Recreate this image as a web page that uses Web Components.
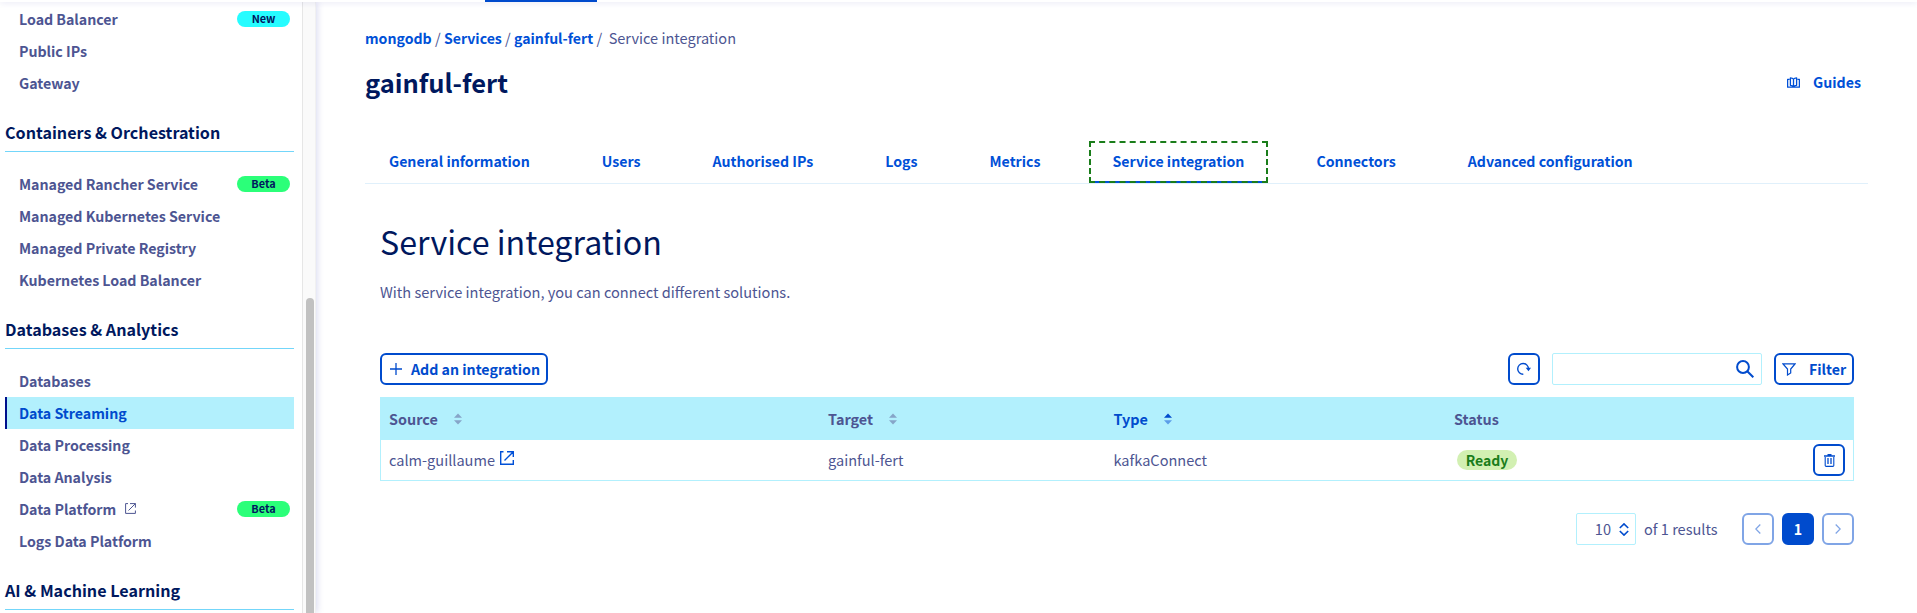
<!DOCTYPE html>
<html lang="en">
<head>
<meta charset="utf-8">
<title>Service integration</title>
<style>
html,body{margin:0;height:100%;overflow:hidden;background:#fff}
body{font:400 14.550px/22px "Noto Sans CJK SC",sans-serif;color:#4d5592;
--primary:#0050d7;--strong:#004bcd;--deep:#00185e;--text:#4d5592;--ice:#b2f0fd}
</style>
</head>
<body>
<cloud-app></cloud-app>
<script>
const define=(name,css,html)=>customElements.define(name,class extends HTMLElement{
  constructor(){super();this.attachShadow({mode:'open'}).innerHTML=`<style>:host{display:block;box-sizing:border-box}*{box-sizing:border-box}svg{display:block;flex:none}${css}</style>${typeof html==='function'?html(this):html}`}
});

const ICONS={
  external:['0 0 14 14','<path d="M3.500 .7H.7v12.600h12.600V9M7 .7h6.300V6M13.300 .7 4.500 9.500" fill="none" stroke="currentColor" stroke-width="1.400"/>'],
  externalThin:['0 0 11 11','<path d="M3 .6H.6v9.800h9.800V7.500M5 .6h5.400v4M10.400 .6 3.500 7.500" fill="none" stroke="currentColor" stroke-width="1"/>'],
  plus:['0 0 12 12','<path d="M6 0v12M0 6h12" fill="none" stroke="currentColor" stroke-width="1.300"/>'],
  refresh:['0 0 14 14','<path d="M6.300 12.300A5.400 5.400 0 1 1 11.500 7" fill="none" stroke="currentColor" stroke-width="1.400"/><path d="M8.700 5.800h5.300L11.500 9.300z" fill="currentColor"/>'],
  search:['0 0 18 18','<circle cx="7" cy="7" r="5.900" fill="none" stroke="currentColor" stroke-width="2"/><path d="m11.300 11.300 6 6" stroke="currentColor" stroke-width="2"/>'],
  filter:['0 0 14 13','<path d="M1 .9h12L8.700 6v4L5.500 12V6z" fill="none" stroke="currentColor" stroke-width="1.200"/>'],
  trash:['0 0 11 13','<path d="M3.500 0h4v1.200H11v1.500H0V1.200h3.500z" fill="currentColor"/><path d="M1.200 3v8.500q0 .9.900.9h6.800q.9 0 .9-.9V3" fill="none" stroke="currentColor" stroke-width="1.100"/><path d="M4 4v6M7 4v6" stroke="currentColor" stroke-width="1.300"/>'],
  book:['0 0 13 11','<path d="M2.500 2.400H.6v7.700h11.800V2.400h-1.900M3.400 8.300V.9Q5.600 1 6.500 2.200 7.400 1 9.600.9v7.400Q7.400 8.400 6.500 9.600 5.600 8.400 3.400 8.300zM6.500 2.200v7.400" fill="none" stroke="currentColor" stroke-width="1.300" stroke-linejoin="round"/>'],
  left:['0 0 6 10','<path d="M5.300 .5.8 5l4.500 4.500" fill="none" stroke="currentColor" stroke-width="1.300"/>'],
  right:['0 0 6 10','<path d="m.7.5L5.200 5 .7 9.500" fill="none" stroke="currentColor" stroke-width="1.300"/>'],
  updown:['0 0 10 13','<path d="M.8 5 5 .9 9.200 5M.8 8 5 12.100 9.200 8" fill="none" stroke="currentColor" stroke-width="1.600"/>'],
  sort:['0 0 8 12','<path class="up" d="M0 4.800 4 .5l4 4.300z" fill="var(--up,#86a5c8)"/><path d="M0 7.200h8l-4 4.300z" fill="var(--down,#86a5c8)"/>']
};
define('ui-icon',':host{display:inline-block;flex:none}',e=>{
  const [box,body]=ICONS[e.getAttribute('name')],[,,w,h]=box.split(' ');
  return `<svg viewBox="${box}" width="${w}" height="${h}">${body}</svg>`});

define('ui-badge',`:host{width:53px;height:16px;border-radius:8px;background:#2bff79;color:var(--deep);font-size:10.900px;font-weight:700;line-height:15px;text-align:center;margin-right:4px}:host([kind=new]){background:#26fcff}`,'<slot></slot>');

define('nav-item',`:host{display:flex;align-items:center;justify-content:space-between;height:32px;padding-left:14px;font-size:14.220px;letter-spacing:-.03px;font-weight:700;color:var(--text)}
:host([active]){background:var(--ice);color:var(--strong);border-left:2px solid #00108c;padding-left:12px}
span{display:flex;align-items:center;gap:9px;padding-bottom:1px}slot[name=badge]::slotted(*){margin-top:-1px}`,'<span><slot></slot></span><slot name="badge"></slot>');

define('nav-group',`h2{margin:0 0 16px;height:53px;padding-top:21px;border-bottom:1px solid #73d6fa;font-size:16.130px;line-height:24px;font-weight:700;color:var(--deep)}`,
  e=>(e.hasAttribute('label')?`<h2>${e.getAttribute('label').replace('&','&amp;')}</h2>`:'')+'<slot></slot>');

define('side-nav',`:host{display:flex;width:316px;height:611px;overflow:hidden;background:#fff;box-shadow:0 0 8px rgba(0,14,156,.2)}
nav{width:302px;padding:1px 8px 0 5px}
.track{width:14px;background:#fafafa;border-left:1px solid #e6e6e6;border-right:1px solid #f1f1f1;padding:296px 1px 0 3px}
.thumb{width:8px;height:400px;border-radius:4px;background:#c1c1c1}`,`
<nav>
<nav-group><nav-item>Load Balancer<ui-badge slot="badge" kind="new">New</ui-badge></nav-item><nav-item>Public IPs</nav-item><nav-item>Gateway</nav-item></nav-group>
<nav-group label="Containers &amp; Orchestration"><nav-item>Managed Rancher Service<ui-badge slot="badge">Beta</ui-badge></nav-item><nav-item>Managed Kubernetes Service</nav-item><nav-item>Managed Private Registry</nav-item><nav-item>Kubernetes Load Balancer</nav-item></nav-group>
<nav-group label="Databases &amp; Analytics"><nav-item>Databases</nav-item><nav-item active>Data Streaming</nav-item><nav-item>Data Processing</nav-item><nav-item>Data Analysis</nav-item><nav-item>Data Platform<ui-icon name="externalThin"></ui-icon><ui-badge slot="badge">Beta</ui-badge></nav-item><nav-item>Logs Data Platform</nav-item></nav-group>
<nav-group label="AI &amp; Machine Learning"></nav-group>
</nav><div class="track"><div class="thumb"></div></div>`);

define('ui-button',`:host{display:flex;align-items:center;justify-content:center;height:32px;min-width:32px;border:2px solid var(--strong);border-radius:6px;color:var(--strong);font-size:14.200px;font-weight:700;background:#fff;line-height:28px;white-space:nowrap}
:host([filled]){background:var(--strong);color:#fff}:host([disabled]){border-color:#80a5e6;color:#80a5e6}`,'<slot></slot>');

define('bread-crumb',`:host{display:flex;height:22px;white-space:pre}a{color:var(--primary);font-weight:700;font-size:14.120px}`,
 '<a>mongodb</a><span> / </span><a>Services</a><span> / </span><a>gainful-fert</a><span> /  </span><span>Service integration</span>');

define('tab-bar',`:host{display:flex;gap:24px;height:43px;border-bottom:1px solid #e0f0fb;font-size:14.150px;font-weight:700;color:var(--primary)}
a{height:42px;padding:0 24px;line-height:40px;white-space:nowrap}
a.on{outline:2px dashed #1a7d1a;outline-offset:-2px;border-bottom:2px solid var(--primary)}`,
 ['General information','Users','Authorised IPs','Logs','Metrics','Service integration','Connectors','Advanced configuration'].map(t=>`<a${t==='Service integration'?' class="on"':''}>${t}</a>`).join(''));

define('tool-bar',`:host{display:flex;align-items:center;height:32px}
.add{width:168px;gap:9px;padding-left:2px}.re{margin-left:auto}.search{width:210px;height:32px;margin:0 12px;border:1px solid var(--ice);border-radius:2px;display:flex;align-items:center;justify-content:flex-end;padding-right:7px;color:var(--strong)}
.filter{width:80px;gap:13px}`,`
<ui-button class="add"><ui-icon name="plus"></ui-icon><span>Add an integration</span></ui-button>
<ui-button class="re"><ui-icon name="refresh"></ui-icon></ui-button>
<div class="search"><ui-icon name="search"></ui-icon></div>
<ui-button class="filter"><ui-icon name="filter"></ui-icon><span>Filter</span></ui-button>`);

define('data-table',`.row{display:grid;grid-template-columns:439px 285.500px 340.500px 1fr;align-items:center}
.row>div{padding-left:9px;display:flex;align-items:center}
.head{height:43px;background:var(--ice);font-weight:700;font-size:14.400px}
.head>div{gap:16px}.type{color:var(--strong);--up:#004bcd;--down:#5b9de8}
.body{height:41px;border:1px solid var(--ice);border-top:0;grid-template-columns:438px 285.500px 340.500px 1fr}
.body>div:first-child{padding-left:8px}
.src{gap:5px}.src ui-icon{color:var(--primary);margin-top:-5px}
.state{background:#d2f0b2;color:#1a7d1a;font-weight:700;font-size:14px;height:20px;line-height:20px;border-radius:10px;width:60px;text-align:center;margin-left:3px}
.del{margin-left:auto;margin-right:8px}`,`
<div class="row head"><div>Source<ui-icon name="sort"></ui-icon></div><div>Target<ui-icon name="sort"></ui-icon></div><div class="type">Type<ui-icon name="sort"></ui-icon></div><div>Status</div></div>
<div class="row body"><div class="src">calm-guillaume<ui-icon name="external"></ui-icon></div><div>gainful-fert</div><div>kafkaConnect</div><div><span class="state">Ready</span><ui-button class="del"><ui-icon name="trash"></ui-icon></ui-button></div></div>`);

define('page-nav',`:host{display:flex;justify-content:flex-end;align-items:center;height:32px}
.size{display:flex;align-items:center;justify-content:flex-end;gap:8px;width:60px;height:32px;border:1px solid var(--ice);border-radius:2px;padding-right:6px}
.size ui-icon{color:var(--strong)}.of{margin:0 24px 0 8px;width:74px;white-space:nowrap}ui-button+ui-button{margin-left:8px}`,`
<div class="size"><span>10</span><ui-icon name="updown"></ui-icon></div><span class="of">of 1 results</span>
<ui-button disabled><ui-icon name="left"></ui-icon></ui-button><ui-button filled>1</ui-button><ui-button disabled><ui-icon name="right"></ui-icon></ui-button>`);

define('service-page',`:host{flex:1;padding:25px 49px 0 49px}
header{display:flex;justify-content:space-between;align-items:center;height:40px;margin-top:13px;padding-right:7px}
h1{margin:0;font-size:25.500px;line-height:40px;font-weight:700;color:var(--deep)}
.guides{display:flex;align-items:center;gap:13px;color:var(--primary);font-weight:700;font-size:14.200px}
tab-bar{margin-top:39px}
section{margin:35px 14px 0 15px}
h2{margin:0;font-size:32.200px;line-height:44px;font-weight:400;color:var(--deep)}
p{margin:18px 0 50px;line-height:22px;font-size:14.600px}
data-table{margin-top:12px}page-nav{margin-top:32px}`,`
<bread-crumb></bread-crumb>
<header><h1>gainful-fert</h1><div class="guides"><ui-icon name="book"></ui-icon><span>Guides</span></div></header>
<tab-bar></tab-bar>
<section><h2>Service integration</h2><p>With service integration, you can connect different solutions.</p>
<tool-bar></tool-bar><data-table></data-table><page-nav></page-nav></section>`);

define('cloud-app',`:host{height:613px;overflow:hidden}
.top{height:2px;background:#fff;box-shadow:0 0 6px rgba(0,14,156,.2);position:relative;z-index:1;padding-left:485px}
.top i{display:block;width:112px;height:2px;background:var(--strong)}
main{display:flex;height:611px}`,`<div class="top"><i></i></div><main><side-nav></side-nav><service-page></service-page></main>`);
</script>
</body>
</html>
